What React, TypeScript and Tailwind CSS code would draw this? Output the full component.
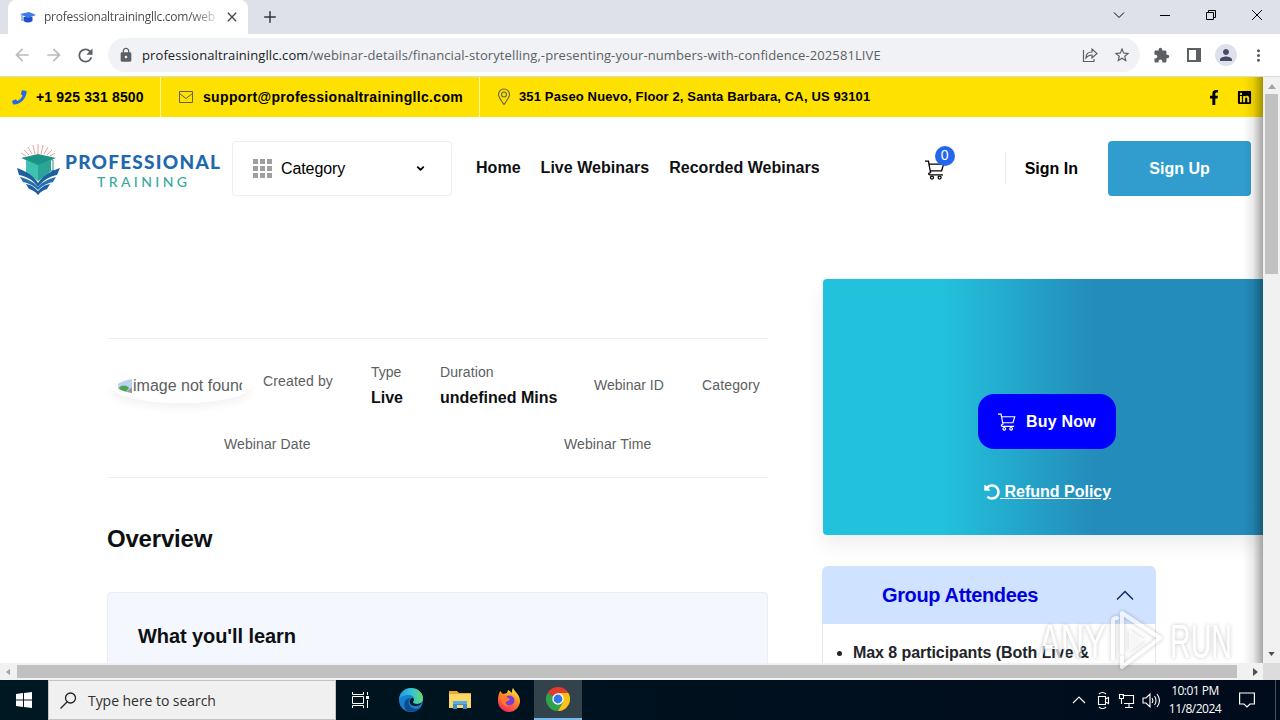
import {
  FaFacebookF,
  FaLinkedin,
  FaUndoAlt,
} from "react-icons/fa";
import {
  MdArrowBack,
  MdArrowForward,
  MdClose,
  MdExtension,
  MdLock,
  MdMoreVert,
  MdPerson,
  MdRefresh,
  MdStarBorder,
} from "react-icons/md";
import { ChevronDown, Plus } from "lucide-react";

type IconProps = { className?: string };

function CartIcon({ className }: IconProps) {
  return (
    <svg
      viewBox="0 0 20 20"
      className={className}
      fill="none"
      stroke="currentColor"
      strokeWidth="1.3"
    >
      <path d="M0 1.2h3.4l2.2 11.6M4 4.2h14.6l-2 6.6H5.2M5.6 12.8h-.8c-1.5 0-1.5 2 0 2H18" />
      <circle cx="7" cy="17.6" r="1.5" />
      <circle cx="14.6" cy="17.6" r="1.5" />
    </svg>
  );
}

function Logo() {
  return (
    <div className="flex h-[55px] w-[206px] items-start">
      <svg viewBox="0 0 46 55" className="h-[55px] w-[46px] shrink-0">
        <g stroke="#e58a84" strokeWidth="0.8">
          <path d="M22 13V3M19 13L17 4M25 13l2-9M16 13L12 6M28 13l4-7M13 14L8 9M31 14l5-5M10 15l-5-3M34 15l5-3" />
        </g>
        <path d="M10 19l12 4 13-4v11l-13 10-12-8z" fill="#3cc2ae" />
        <path d="M22 23l13-4v11l-13 10z" fill="#2aa595" />
        <path d="M5 17l17-4 18 4-18 7z" fill="#1c9384" />
        <path d="M22 17l15 2v11" stroke="#1c9384" fill="none" />
        <path d="M35.500 29h3v5h-3z" fill="#1c9384" />
        <path d="M1 27c9 3 17 8 21 15v4C17 38 9 35 3 34z" fill="#1e5f9f" />
        <path d="M44 27c-9 3-18 8-22 15v4c6-8 13-11 19-12z" fill="#1e5f9f" />
        <path d="M4 36c8 2 14 5 18 10v3C17 44 12 42 7 41z" fill="#2570b0" />
        <path d="M40 36c-8 2-14 5-18 10v3c5-5 10-7 15-8z" fill="#2570b0" />
        <path d="M10 43c6 1 9 4 12 7v4c-3-4-6-5-9-6z" fill="#1e5f9f" />
        <path d="M34 43c-6 1-9 4-12 7v4c3-4 6-5 9-6z" fill="#1e5f9f" />
      </svg>
      <div className="w-[160px] pt-[9px] pl-[3px] font-['Lato',sans-serif]">
        <p className="text-[19px] leading-[24px] font-black tracking-[1.25px] whitespace-nowrap text-[#1e68ae]">
          PROFESSIONAL
        </p>
        <p className="pl-[32px] text-[14px] leading-[16px] font-medium tracking-[3.4px] text-[#35aaa0]">
          TRAINING
        </p>
      </div>
    </div>
  );
}

function TabStrip() {
  return (
    <div className="flex h-[34px] items-end bg-[#dee1e8]">
      <div className="ml-2 flex h-[34px] w-[240px] items-center rounded-t-lg bg-white pl-3">
        <svg viewBox="0 0 16 16" className="h-4 w-4 shrink-0">
          <path d="M3.500 8v4c3 2 6 2 9 0V8z" fill="#1e50c8" />
          <path d="M0 5l9-2 7 3-8 3z" fill="#3f7bea" />
          <path d="M2 6v6" stroke="#3f7bea" />
        </svg>
        <div className="ml-2 w-[172px] overflow-hidden bg-linear-to-r from-[#45484c] from-85% to-[#d5d6d8] bg-clip-text text-[12px] tracking-[-0.26px] whitespace-nowrap text-transparent">
          professionaltrainingllc.com/web
        </div>
        <MdClose className="ml-[8px] h-4 w-4 shrink-0 text-[#45484c]" />
      </div>
      <Plus className="mb-2 ml-[13px] h-[18px] w-[18px] text-[#33363a]" />
      <div className="mr-[17px] mb-[13px] ml-auto flex items-center gap-[34px] text-black">
        <svg
          viewBox="0 0 12 12"
          className="h-3 w-3"
          fill="none"
          stroke="currentColor"
        >
          <path d="M1 3.500l5 5 5-5" />
        </svg>
        <svg viewBox="0 0 12 12" className="h-3 w-3" stroke="currentColor">
          <path d="M1 6.500h10" />
        </svg>
        <svg
          viewBox="0 0 12 12"
          className="h-3 w-3"
          fill="none"
          stroke="currentColor"
        >
          <path d="M1.500 3.500h7v7h-7zM3.500 3.500v-2h7v7h-2" />
        </svg>
        <svg viewBox="0 0 12 12" className="h-3 w-3" stroke="currentColor">
          <path d="M1 1l10 10M11 1L1 11" />
        </svg>
      </div>
    </div>
  );
}

function AddressBar() {
  return (
    <div className="flex h-[43px] items-center border-b border-[#d8dbe0] bg-white text-[#5c6065]">
      <MdArrowBack className="ml-3 h-5 w-5 text-[#b9bbbe]" />
      <MdArrowForward className="ml-3 h-5 w-5 text-[#b9bbbe]" />
      <MdRefresh className="ml-[11px] h-[21px] w-[21px]" />
      <div className="ml-3 flex h-[34px] w-[1032px] items-center rounded-full bg-[#f0f2f5] pr-[9px] pl-[10px]">
        <MdLock className="h-4 w-4" />
        <p className="mt-px ml-[8px] text-[13px] tracking-[0.1px] whitespace-nowrap">
          <span className="text-[#202124]">professionaltrainingllc.com</span>
          /webinar-details/financial-storytelling,-presenting-your-numbers-with-confidence-202581LIVE
        </p>
        <svg
          viewBox="0 0 16 16"
          className="ml-auto h-4 w-4"
          fill="none"
          stroke="currentColor"
          strokeWidth="1.2"
        >
          <path d="M1.500 3v11.500H12V12M4 11c0-4 2-6 6-6V2l5 4.500-5 4.500V8C7 8 5.500 9 4 11z" />
        </svg>
        <MdStarBorder className="ml-[15px] h-[18px] w-[18px]" />
      </div>
      <MdExtension className="ml-[13px] h-[17px] w-[17px]" />
      <svg viewBox="0 0 14 14" className="ml-[17px] h-[14px] w-[14px]">
        <path d="M0 0h14v14H0zM2 2v10h7V2z" fill="#5c6065" fillRule="evenodd" />
      </svg>
      <div className="ml-[14px] flex h-[22px] w-[22px] items-center justify-center rounded-full bg-[#dee1ec]">
        <MdPerson className="h-[18px] w-[18px] text-[#474c66]" />
      </div>
      <MdMoreVert className="ml-[12px] h-[19px] w-[19px]" />
    </div>
  );
}

function TopBar() {
  return (
    <div className="flex h-10 items-center bg-[#ffe100] text-[14px] font-bold text-black">
      <div className="flex h-full w-[161px] items-center border-r border-[#fff3a0] pl-3">
        <svg viewBox="0 0 15 15" className="h-[15px] w-[15px]" fill="#2467ec">
          <path d="M10.500.3l3.300.4c.5.100.8.500.8 1C14.300 8.500 8.500 14.300 1.800 14.600c-.5 0-.9-.3-1-.8L.2 11.500c-.1-.5.100-.9.600-1.100l2.600-.9c.4-.1.800 0 1 .3l.9 1.200c2.200-1 4.200-3 5.200-5.300L9.400 4.600c-.3-.3-.4-.7-.3-1l.5-2.700c.1-.4.500-.6.900-.6z" />
        </svg>
        <p className="ml-[9px] tracking-[0.15px]">+1 925 331 8500</p>
      </div>
      <div className="flex h-full w-[319px] items-center border-r border-[#fff3a0] pl-[17px]">
        <svg
          viewBox="0 0 16 16"
          className="h-4 w-4"
          fill="none"
          stroke="#5f604e"
        >
          <path d="M1.500 2.500h13v11h-13zM1.500 4.500L8 9.500l6.500-5" />
        </svg>
        <p className="ml-[9px] tracking-[0.33px]">support@professionaltrainingllc.com</p>
      </div>
      <svg
        viewBox="0 0 14 18"
        className="ml-[17px] h-[18px] w-[14px]"
        fill="none"
        stroke="#5f604e"
        strokeWidth="1.1"
      >
        <path d="M7 16.500C4 12 1.500 9.500 1.500 6.500a5.500 5.500 0 0 1 11 0c0 3-2.500 5.500-5.500 10z" />
        <circle cx="7" cy="6.500" r="2.500" />
      </svg>
      <p className="ml-[8px] text-[13px] tracking-[0.14px]">
        351 Paseo Nuevo, Floor 2, Santa Barbara, CA, US 93101
      </p>
      <FaFacebookF className="ml-auto h-[15px] w-[14px]" />
      <FaLinkedin className="mr-[11px] ml-4 h-[15px] w-[15px]" />
    </div>
  );
}

function Header() {
  return (
    <div className="flex h-[102px] items-center pl-4 text-black">
      <Logo />
      <div className="ml-[10px] flex h-[55px] w-[220px] items-center rounded border border-[#eeeeee] pr-[25px] pl-5">
        <div className="grid grid-cols-3 gap-[2px]">
          {Array.from({ length: 9 }, (_, i) => (
            <div key={i} className="h-[5px] w-[5px] bg-[#9f9f9f]" />
          ))}
        </div>
        <p className="mt-px ml-[9px] text-[16px] tracking-[-0.1px]">Category</p>
        <ChevronDown strokeWidth={4} className="ml-auto h-[11px] w-[11px]" />
      </div>
      <div className="ml-6 flex gap-5 text-[16px] font-bold tracking-[0.03px] text-[#0e1012]">
        <p>Home</p>
        <p>Live Webinars</p>
        <p>Recorded Webinars</p>
      </div>
      <div className="relative mt-[3px] ml-[105px]">
        <CartIcon className="h-5 w-5" />
        <div className="absolute -top-[14px] left-[10px] flex h-5 w-5 items-center justify-center rounded-full bg-[#2467ec] text-[14px] text-white">
          0
        </div>
      </div>
      <div className="ml-[60px] h-8 w-px bg-[#ebebeb]" />
      <p className="mt-[2px] ml-[19px] text-[16px] font-bold">Sign In</p>
      <div className="mr-3 ml-auto flex h-[55px] w-[143px] items-center justify-center rounded bg-[#319dcf] pt-px text-[16px] font-bold text-white">
        Sign Up
      </div>
    </div>
  );
}

function BrokenImage() {
  return (
    <div className="mb-px flex h-[34px] w-[140px] items-center overflow-hidden rounded-[50%] border-[6px] border-white text-[16px] text-[#5d5e62] shadow-[0_5px_9px_rgba(0,0,0,0.05)]">
      <svg viewBox="0 0 16 16" className="h-4 w-4 shrink-0">
        <path d="M1 1h14v9L8 15H1z" fill="#bcd3ee" />
        <path d="M1 13c1-6 7-7 11-3l-4 5H1z" fill="#4da453" />
        <path d="M8 15l7-6v6z" fill="#9a9a9a" />
      </svg>
      <p className="whitespace-nowrap">image not found</p>
    </div>
  );
}

function WebinarMeta() {
  return (
    <div className="mt-[59px] h-[140px] w-[661px] border-y border-[#eeeeee] text-[14px] text-[#5d5e62]">
      <div className="flex h-[94px] items-center pl-1">
        <BrokenImage />
        <p className="mb-[10px] ml-3 w-[108px] tracking-[0.15px]">Created by</p>
        <div className="w-[69px]">
          <p>Type</p>
          <p className="mt-[2px] text-[16px] leading-[26px] font-bold text-[#0e1012]">Live</p>
        </div>
        <div className="w-[154px]">
          <p className="tracking-[0.1px]">Duration</p>
          <p className="mt-[2px] text-[16px] leading-[26px] font-bold text-[#0e1012]">
            undefined Mins
          </p>
        </div>
        <p className="mb-[2px] w-[108px]">Webinar ID</p>
        <p className="mb-[2px] tracking-[0.15px]">Category</p>
      </div>
      <div className="flex pt-[1px] pl-[117px] tracking-[0.1px]">
        <p className="w-[340px]">Webinar Date</p>
        <p>Webinar Time</p>
      </div>
    </div>
  );
}

function Content() {
  return (
    <div className="flex h-[444px] pl-[107px]">
      <div className="w-[661px]">
        <WebinarMeta />
        <h2 className="mt-[43px] text-[24px] leading-9 font-bold tracking-[-0.2px] text-[#0e1012]">
          Overview
        </h2>
        <div className="mt-[35px] h-[100px] rounded border border-[#e9edf5] bg-[#f4f7fe] pt-7 pl-[30px] text-[20px] leading-[30px] font-bold tracking-[-0.08px] text-[#0e1012]">
          What you'll learn
        </div>
      </div>
      <div className="ml-[54px] w-[441px]">
        <div className="ml-px h-[256px] rounded-l bg-linear-to-r from-[#22c1dc] from-27% to-[#248cba] to-62% pt-[115px] shadow-[0_10px_20px_rgba(0,0,0,0.07)]">
          <div className="ml-[155px] flex h-[55px] w-[138px] items-center rounded-[16px] bg-[#0000ff] pl-5 text-[16px] font-bold text-white">
            <CartIcon className="h-[18px] w-[18px]" />
            <p className="ml-[10px] tracking-[0.2px]">Buy Now</p>
          </div>
          <div className="mt-[31px] ml-[161px] flex items-center text-[16px] font-bold text-white underline">
            <FaUndoAlt className="h-4 w-4" />
            <p className="whitespace-pre"> Refund Policy</p>
          </div>
        </div>
        <div className="mt-[31px] w-[334px] overflow-hidden rounded-t-md">
          <div className="flex h-[58px] items-center bg-[#cfe2ff] pr-[22px] pl-[60px]">
            <p className="text-[20px] font-bold tracking-[-0.37px] text-[#0000dd]">
              Group Attendees
            </p>
            <svg
              viewBox="0 0 18 11"
              className="ml-auto h-[11px] w-[18px]"
              fill="none"
              stroke="#0c2d63"
              strokeWidth="1.5"
            >
              <path d="M1 9.500l8-8 8 8" />
            </svg>
          </div>
          <ul className="h-[60px] list-disc border-x border-[#e3e5e8] bg-white pt-[17px] pl-[30px] text-[16px] font-bold tracking-[-0.07px] text-[#212529]">
            <li>Max 8 participants (Both Live &amp;</li>
          </ul>
        </div>
      </div>
    </div>
  );
}

function VerticalScroll() {
  return (
    <div className="flex w-[17px] flex-col items-center justify-between bg-[#f1f1f1] py-[7px]">
      <div>
        <svg viewBox="0 0 8 5" className="mx-auto h-[5px] w-2">
          <path d="M0 5l4-5 4 5z" fill="#a3a3a3" />
        </svg>
        <div className="mt-[5px] h-[180px] w-[13px] bg-[#c1c1c1]" />
      </div>
      <svg viewBox="0 0 8 5" className="h-[4px] w-[7px]">
        <path d="M0 0l4 5 4-5z" fill="#505050" />
      </svg>
    </div>
  );
}

function HorizontalScroll() {
  return (
    <div className="flex h-[17px] items-center bg-[#f1f1f1]">
      <svg viewBox="0 0 5 8" className="ml-[6px] h-2 w-1">
        <path d="M5 0L0 4l5 4z" fill="#a3a3a3" />
      </svg>
      <div className="ml-[7px] h-[13px] w-[1220px] bg-[#c1c1c1]" />
      <svg viewBox="0 0 5 8" className="ml-4 h-2 w-[5px]">
        <path d="M0 0l5 4-5 4z" fill="#505050" />
      </svg>
      <div className="ml-auto h-full w-[17px] bg-[#dcdcdc]" />
    </div>
  );
}

function EdgeIcon() {
  return (
    <svg viewBox="0 0 24 24" className="h-6 w-6">
      <defs>
        <linearGradient id="edgeTop" x1="0" x2="1">
          <stop offset="0" stopColor="#2498dc" />
          <stop offset="0.5" stopColor="#35c1d8" />
          <stop offset="1" stopColor="#63db6c" />
        </linearGradient>
      </defs>
      <circle cx="12" cy="12" r="12" fill="#1580d0" />
      <path
        d="M0 11C1 4 6 0 12 0c7 0 12 5 12 10 0 4-3 6-6 6-3 0-4-1-4-2s1-1 1-3c0-2-2-4-5-4-5 0-9 2-10 4z"
        fill="url(#edgeTop)"
      />
      <path d="M8 23c-5-5-3-12 3-13-3 4-1 10 5 11 3 0 5-1 6-2-3 4-9 6-14 4z" fill="#114a8b" />
      <path d="M15 11c0 2-1 2-1 3s1 2 4 2c2 0 4-1 5-2-1 3-4 4-7 4-4 0-6-3-5-6 1-2 3-3 4-1z" fill="#001722" />
    </svg>
  );
}

function FolderIcon() {
  return (
    <svg viewBox="0 0 22 20" className="h-5 w-[22px]">
      <path d="M0 1h8l2 2h12v15H0z" fill="#e8a92e" />
      <path d="M0 4h22v14H0z" fill="#fcd667" />
      <path d="M4 19v-8h14v8h-4v-4H8v4z" fill="#3c8fce" />
      <path d="M4 11h14v3H4z" fill="#56aee2" />
    </svg>
  );
}

function FirefoxIcon() {
  return (
    <svg viewBox="0 0 24 24" className="h-6 w-6">
      <defs>
        <linearGradient id="fox" x1="0.8" y1="0" x2="0.3" y2="1">
          <stop offset="0" stopColor="#fff04a" />
          <stop offset="0.45" stopColor="#ff8a22" />
          <stop offset="1" stopColor="#f5255f" />
        </linearGradient>
      </defs>
      <path
        d="M2 6l1-3 3 3 4-1 1-3c2 1 3 2 4 3 0-2 0-4 1-5 2 4 7 7 7 13 0 6-5 11-11 11S1 19 1 13c0-3 0-5 1-7z"
        fill="url(#fox)"
      />
      <circle cx="12.500" cy="12.500" r="5" fill="#7a3ddb" />
      <path d="M4 9c2-1 5-1 7 1l2 1c-1 2-3 2-4 3-1 2 1 4 4 4-5 2-9-2-9-9z" fill="#ff7a2a" />
    </svg>
  );
}

function ChromeIcon() {
  return (
    <svg viewBox="0 0 24 24" className="h-6 w-6">
      <path d="M12 12L1.600 6A12 12 0 0 1 22.400 6z" fill="#e33b2e" />
      <path d="M12 12L1.600 6A12 12 0 0 0 12 24l5-9z" fill="#2fa24c" />
      <path d="M12 12l5 3-5 9A12 12 0 0 0 22.400 6H12z" fill="#fbc316" />
      <circle cx="12" cy="12" r="5.700" fill="#fff" />
      <circle cx="12" cy="12" r="4.400" fill="#3078e8" />
    </svg>
  );
}

function Taskbar() {
  return (
    <div className="flex h-10 items-center bg-linear-to-r from-[#001822] to-[#000b1b] text-white">
      <div className="flex h-full w-12 items-center justify-center">
        <svg viewBox="0 0 16 16" className="h-4 w-4" fill="#fff">
          <path d="M0 2l7-1v6.500H0zM8 1l8-1v7.500H8zM0 8.500h7V15l-7-1zM8 8.500h8V16l-8-1z" />
        </svg>
      </div>
      <div className="flex h-full w-[288px] items-center border border-[#c4c4c4] bg-[#f0f0f0] pl-[11px] text-[#303030]">
        <svg
          viewBox="0 0 17 17"
          className="h-[17px] w-[17px]"
          fill="none"
          stroke="#222"
          strokeWidth="1.3"
        >
          <circle cx="10.500" cy="6" r="5" />
          <path d="M7 10l-6.500 6.500" />
        </svg>
        <p className="ml-[11px] text-[14px] tracking-[-0.05px]">Type here to search</p>
      </div>
      <div className="flex h-full w-12 items-center justify-center">
        <svg viewBox="0 0 17 16" className="h-4 w-[17px]" fill="none" stroke="#fff">
          <path d="M.5 0v2.500h11V0M.5 4.500h11v7H.5zM.5 16v-2.500h11V16M15.500 0v3M15.500 8v8" />
          <path d="M14 4h3v3h-3z" fill="#fff" stroke="none" />
        </svg>
      </div>
      <div className="flex h-full w-[54px] items-center justify-center">
        <EdgeIcon />
      </div>
      <div className="flex h-full w-[44px] items-center justify-center">
        <FolderIcon />
      </div>
      <div className="flex h-full w-[52px] items-center justify-center pl-[2px]">
        <FirefoxIcon />
      </div>
      <div className="flex h-full w-12 items-center justify-center border-b-2 border-[#76b9ed] bg-[#33434c]">
        <ChromeIcon />
      </div>
      <svg
        viewBox="0 0 88 18"
        className="ml-auto h-[18px] w-[88px]"
        fill="none"
        stroke="#fff"
        strokeWidth="1.1"
      >
        <path d="M1 12l6-6 6 6" />
        <path d="M26.500 5.500h7v8h-7zM33.500 8l3-1.500v6L33.500 11M27 3c2-2 5-2 7 0M27 16c2 2 5 2 7 0" />
        <path d="M50.500 4.500h11v8H52M57 13v3M53 16.500h8M47.500 3.500h4v4h-4zM49.500 8v5" />
        <path d="M71 7h3l4-4v13l-4-4h-3zM80 7c1 1.500 1 3.500 0 5M82.500 5c2 2.500 2 6.500 0 9M85 3c3 4 3 9 0 13" />
      </svg>
      <div className="ml-[7px] w-[56px] text-center text-[12px] leading-[18px] tracking-[-0.5px] whitespace-nowrap">
        <p>10:01 PM</p>
        <p>11/8/2024</p>
      </div>
      <svg
        viewBox="0 0 16 16"
        className="ml-[16px] h-4 w-4"
        fill="none"
        stroke="#fff"
        strokeWidth="1.2"
      >
        <path d="M.6 1h14.800v11H11l-3 3-3-3H.6z" />
      </svg>
      <div className="ml-5 h-full w-px bg-[#49525c]" />
      <div className="w-1" />
    </div>
  );
}

function Watermark() {
  return (
    <svg
      viewBox="0 0 200 64"
      className="absolute top-[609px] left-[1036px] h-16 w-[200px] font-['Liberation_Sans',sans-serif] opacity-65 drop-shadow-[0_0_2px_rgba(0,0,0,0.35)]"
      fill="#fff"
    >
      <text x="3" y="49" fontSize="49" textLength="67" lengthAdjust="spacingAndGlyphs">
        ANY
      </text>
      <text x="134" y="49" fontSize="49" textLength="62" lengthAdjust="spacingAndGlyphs">
        RUN
      </text>
      <g fill="none" stroke="#fff" strokeWidth="4" strokeLinejoin="round" strokeLinecap="round">
        <path d="M86 44V4l38 25-38 29V48M77 50V12q0-3 4-3" />
      </g>
      <path d="M93 20l16 11-16 12z" fillOpacity="0.8" />
    </svg>
  );
}

function App() {
  return (
    <div className="relative h-[720px] w-[1280px] overflow-hidden bg-white font-['Open_Sans',sans-serif]">
      <TabStrip />
      <AddressBar />
      <div className="flex h-[586px]">
        <div className="relative h-full w-[1263px] overflow-hidden bg-white font-['Liberation_Sans',Arial,sans-serif]">
          <TopBar />
          <Header />
          <div className="pt-[60px]">
            <Content />
          </div>
          {/* shadow cast by the closed side menu */}
          <div className="absolute inset-y-0 right-0 w-5 bg-linear-to-r from-transparent via-black/8 to-black/35" />
        </div>
        <VerticalScroll />
      </div>
      <HorizontalScroll />
      <Taskbar />
      <Watermark />
    </div>
  );
}

export default App;
